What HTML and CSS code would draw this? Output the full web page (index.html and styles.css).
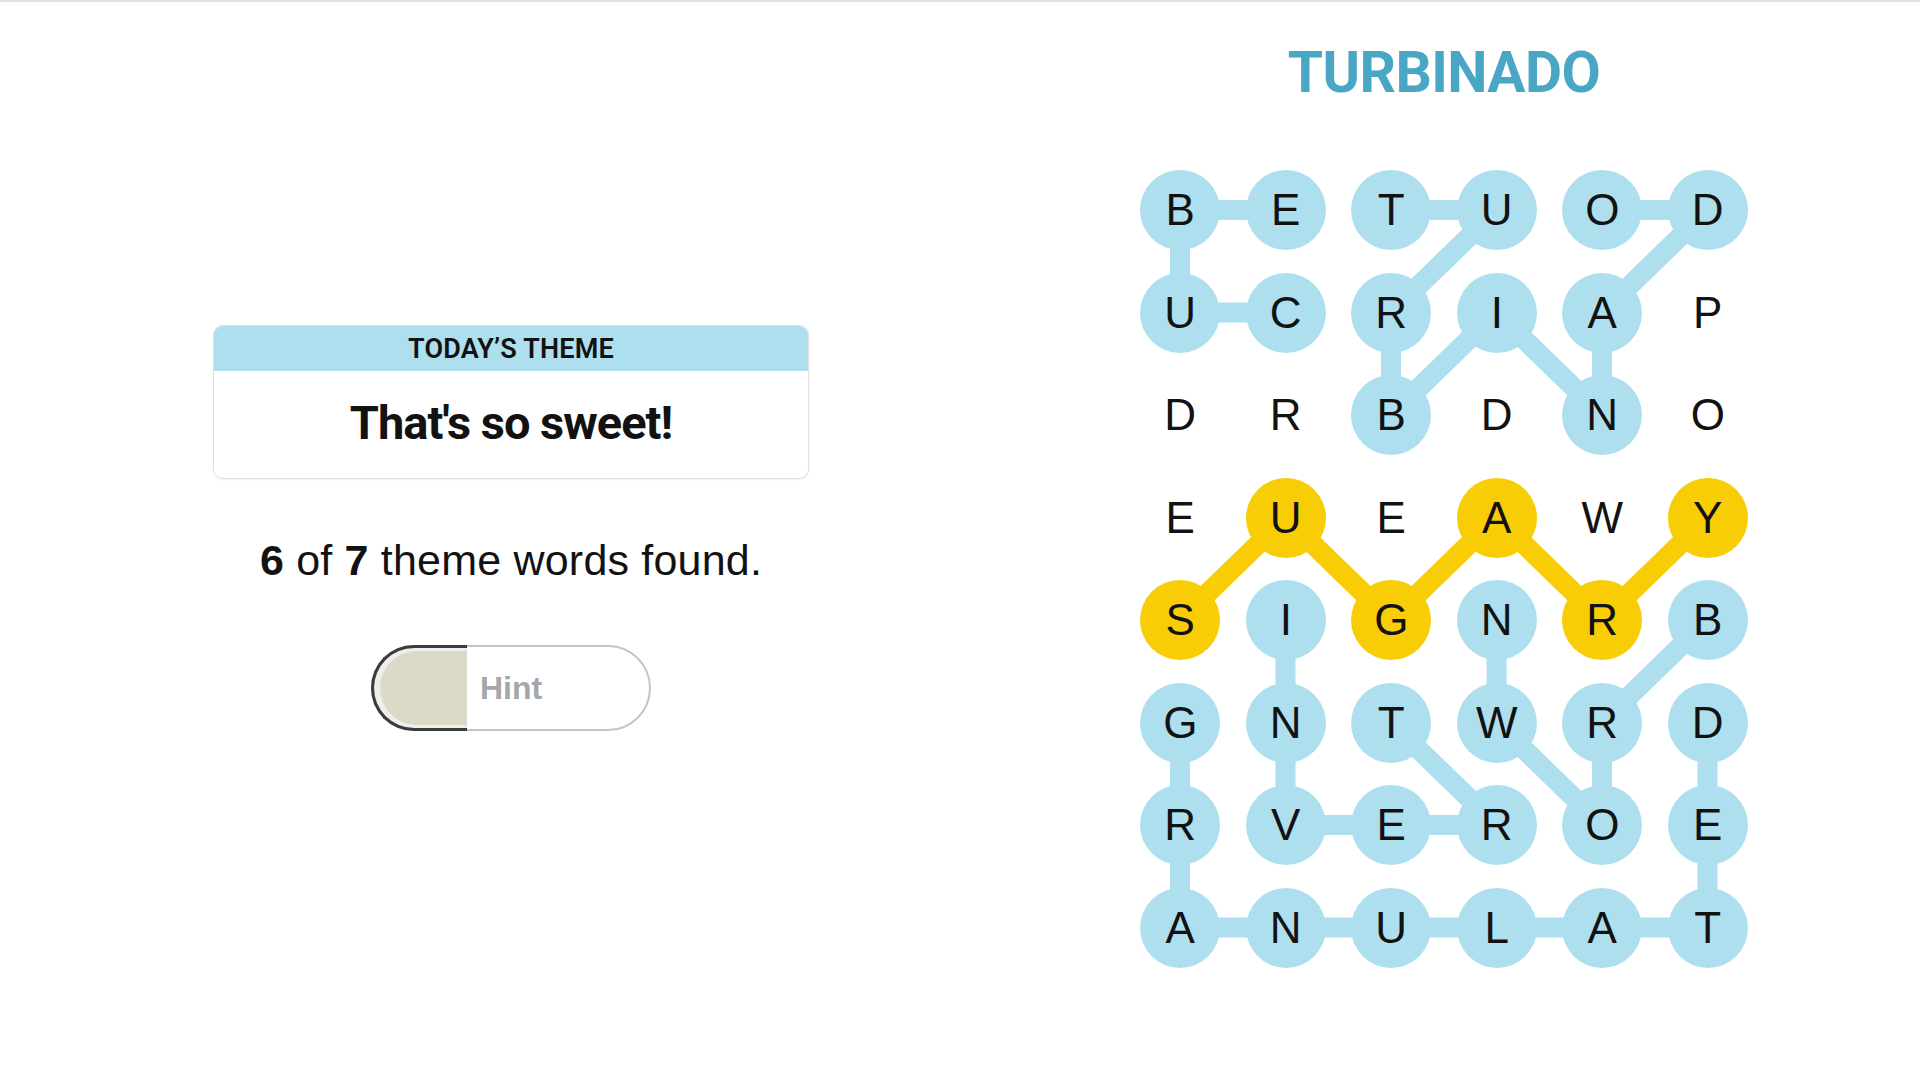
FILE: index.html
```html
<!DOCTYPE html>
<html lang="en">
<head>
<meta charset="utf-8">
<title>Strands</title>
<link rel="stylesheet" href="styles.css">
</head>
<body>
<div class="topline"></div>
<main class="page">
  <section class="left">
    <div class="theme-card">
      <div class="theme-head">TODAY’S THEME</div>
      <div class="theme-body">That's so sweet!</div>
    </div>
    <p class="progress"><b>6</b> of <b>7</b> theme words found.</p>
    <button class="hint">
      <span class="hint-fill"></span>
      <span class="hint-label">Hint</span>
    </button>
  </section>
  <section class="right">
    <h1 class="word">TURBINADO</h1>
    <div class="board">
      <svg class="paths" width="607.5" height="797.5" viewBox="0 0 607.5 797.5">
        <g fill="none" stroke="#aedfee" stroke-width="20" stroke-linejoin="round">
          <polyline points="145.5,40 40,40 40,142.5 145.5,142.5"/>
          <polyline points="251,40 356.5,40 251,142.5 251,245 356.5,142.5 462,245 462,142.5 567.5,40 462,40"/>
          <polyline points="145.5,450 145.5,552.5 145.5,655 251,655 356.5,655 251,552.5"/>
          <polyline points="567.5,450 462,552.5 462,655 356.5,552.5 356.5,450"/>
          <polyline points="567.5,552.5 567.5,655 567.5,757.5 462,757.5 356.5,757.5 251,757.5 145.5,757.5 40,757.5 40,655 40,552.5"/>
        </g>
        <polyline fill="none" stroke="#f8cd05" stroke-width="20" stroke-linejoin="round" points="40,450 145.5,347.5 251,450 356.5,347.5 462,450 567.5,347.5"/>
      </svg>
      <div class="cell b">B</div><div class="cell b">E</div><div class="cell b">T</div><div class="cell b">U</div><div class="cell b">O</div><div class="cell b">D</div>
      <div class="cell b">U</div><div class="cell b">C</div><div class="cell b">R</div><div class="cell b">I</div><div class="cell b">A</div><div class="cell">P</div>
      <div class="cell">D</div><div class="cell">R</div><div class="cell b">B</div><div class="cell">D</div><div class="cell b">N</div><div class="cell">O</div>
      <div class="cell">E</div><div class="cell y">U</div><div class="cell">E</div><div class="cell y">A</div><div class="cell">W</div><div class="cell y">Y</div>
      <div class="cell y">S</div><div class="cell b">I</div><div class="cell y">G</div><div class="cell b">N</div><div class="cell y">R</div><div class="cell b">B</div>
      <div class="cell b">G</div><div class="cell b">N</div><div class="cell b">T</div><div class="cell b">W</div><div class="cell b">R</div><div class="cell b">D</div>
      <div class="cell b">R</div><div class="cell b">V</div><div class="cell b">E</div><div class="cell b">R</div><div class="cell b">O</div><div class="cell b">E</div>
      <div class="cell b">A</div><div class="cell b">N</div><div class="cell b">U</div><div class="cell b">L</div><div class="cell b">A</div><div class="cell b">T</div>
    </div>
  </section>
</main>
</body>
</html>
```
FILE: styles.css
```css
* { box-sizing: border-box; }
html, body { margin: 0; padding: 0; background: #ffffff; }
body {
  width: 1920px;
  height: 1080px;
  overflow: hidden;
  font-family: "Liberation Sans", Arial, sans-serif;
  color: #121212;
}
.topline {
  height: 2px;
  background: #e3e3e3;
}
.page {
  display: flex;
  align-items: flex-start;
}
.left {
  width: 1022px;
  display: flex;
  flex-direction: column;
  align-items: center;
  padding-top: 323px;
}
.theme-card {
  width: 596px;
  border: 1px solid #dedede;
  border-radius: 10px;
  overflow: hidden;
  box-shadow: 0 1px 2px rgba(0,0,0,0.06);
}
.theme-head {
  height: 45px;
  background: #aedfee;
  display: flex;
  align-items: center;
  justify-content: center;
  font-family: Roboto, "Liberation Sans", sans-serif;
  font-weight: 600;
  font-size: 27px;
  letter-spacing: 0.2px;
  color: #121212;
}
.theme-body {
  height: 107px;
  display: flex;
  align-items: center;
  justify-content: center;
  padding-bottom: 4px;
  font-family: Roboto, "Liberation Sans", sans-serif;
  font-weight: 700;
  font-size: 47px;
  letter-spacing: -1px;
  color: #121212;
}
.progress {
  margin: 57px 0 0;
  font-size: 43px;
  line-height: 48px;
  letter-spacing: 0.2px;
  color: #121212;
}
.progress b { font-weight: 700; }
.hint {
  position: relative;
  margin-top: 61px;
  width: 280px;
  height: 86px;
  padding: 0;
  border: 2px solid #c4c4c4;
  border-radius: 43px;
  background: #ffffff;
  display: flex;
  align-items: center;
  justify-content: center;
}
.hint-fill {
  position: absolute;
  top: -2px;
  bottom: -2px;
  left: -2px;
  width: 96px;
  border: 3px solid #3b3b3b;
  border-right: 0;
  border-radius: 43px 0 0 43px;
  background: #dcd9c6;
  box-shadow: inset 3px 0 0 3px #eeeeee;
}
.hint-label {
  position: relative;
  font-family: "Liberation Sans", Arial, sans-serif;
  font-weight: 700;
  font-size: 32px;
  color: #a3a6ab;
}
.right {
  width: 844px;
  display: flex;
  flex-direction: column;
  align-items: center;
  padding-top: 37px;
}
.word {
  margin: 0;
  font-family: Roboto, "Liberation Sans", sans-serif;
  font-weight: 700;
  font-size: 57px;
  line-height: 67px;
  letter-spacing: -0.6px;
  color: #4aa6c5;
}
.board {
  position: relative;
  margin-top: 64px;
  display: grid;
  grid-template-columns: repeat(6, 80px);
  grid-auto-rows: 80px;
  column-gap: 25.5px;
  row-gap: 22.5px;
}
.paths {
  position: absolute;
  left: 0;
  top: 0;
}
.cell {
  position: relative;
  width: 80px;
  height: 80px;
  border-radius: 50%;
  display: flex;
  align-items: center;
  justify-content: center;
  font-family: "Liberation Sans", Arial, sans-serif;
  font-size: 44px;
  line-height: 1;
  color: #121212;
}
.cell.b { background: #aedfee; }
.cell.y { background: #f8cd05; }
```
